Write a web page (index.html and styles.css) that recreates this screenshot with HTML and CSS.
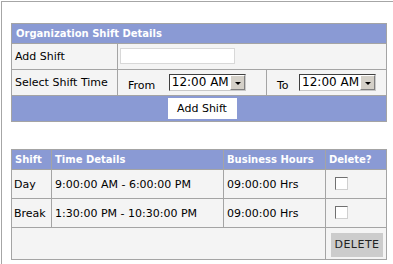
FILE: index.html
```html
<!DOCTYPE html>
<html lang="en">
<head>
    <meta charset="UTF-8">
    <title>Organization Shift Details</title>
    <link rel="stylesheet" href="styles.css">
</head>
<body>
    <div class="marco">
        <table class="tabla tabla-turno">
            <colgroup>
                <col class="col-etiqueta">
                <col class="col-desde">
                <col class="col-hasta">
            </colgroup>
            <tr>
                <th colspan="3" class="titulo">Organization Shift Details</th>
            </tr>
            <tr>
                <td>Add Shift</td>
                <td colspan="2"><input type="text" class="campo"></td>
            </tr>
            <tr>
                <td>Select Shift Time</td>
                <td class="hora hora-desde">
                    <span class="texto-hora">From</span>
                    <span class="combo"><span class="combo-valor">12:00 AM</span><span class="combo-flecha"></span></span>
                </td>
                <td class="hora hora-hasta">
                    <span class="texto-hora">To</span>
                    <span class="combo"><span class="combo-valor">12:00 AM</span><span class="combo-flecha"></span></span>
                </td>
            </tr>
            <tr>
                <td colspan="3" class="fila-boton"><button class="btn-agregar">Add Shift</button></td>
            </tr>
        </table>

        <table class="tabla tabla-lista">
            <colgroup>
                <col class="col-turno">
                <col class="col-tiempo">
                <col class="col-horas">
                <col class="col-borrar">
            </colgroup>
            <tr>
                <th>Shift</th>
                <th>Time Details</th>
                <th>Business Hours</th>
                <th>Delete?</th>
            </tr>
            <tr>
                <td>Day</td>
                <td>9:00:00 AM - 6:00:00 PM</td>
                <td>09:00:00 Hrs</td>
                <td class="celda-casilla"><span class="casilla"></span></td>
            </tr>
            <tr>
                <td>Break</td>
                <td>1:30:00 PM - 10:30:00 PM</td>
                <td>09:00:00 Hrs</td>
                <td class="celda-casilla"><span class="casilla"></span></td>
            </tr>
            <tr class="fila-final">
                <td colspan="3"></td>
                <td class="celda-boton"><button class="btn-borrar">DELETE</button></td>
            </tr>
        </table>
    </div>
</body>
</html>
```

FILE: styles.css
```css
body {
    margin: 0;
    padding: 1px 0 0 1px;
    background: #ffffff;
    font-family: 'DejaVu Sans', Verdana, sans-serif;
    font-size: 11px;
    color: #000;
    overflow: hidden;
}

/* marco gris exterior */
.marco {
    border-top: 1px solid #a6a6a6;
    border-left: 1px solid #a6a6a6;
    padding: 21px 0 0 9px;
    box-sizing: border-box;
    height: 263px;
}

.tabla {
    border-collapse: collapse;
    table-layout: fixed;
    width: 375px;
    background-color: #f4f4f4;
}

.tabla td, .tabla th {
    border: 1px solid #a4a4a4;
    padding: 0 0 0 3px;
    text-align: left;
    white-space: nowrap;
    overflow: hidden;
}

.tabla th {
    background-color: #8a9ad4;
    color: #ffffff;
    font-weight: bold;
    font-size: 10px;
    height: 19px;
}

/* tabla de alta de turnos */
.tabla-turno {
    border: 1px solid #8a9ad4;
}

.col-etiqueta { width: 106px; }
.col-desde { width: 149px; }
.col-hasta { width: 120px; }

.tabla-turno .titulo {
    padding-left: 4px;
}

.tabla-turno td {
    height: 25px;
}

.campo {
    display: block;
    width: 115px;
    height: 16px;
    box-sizing: border-box;
    border: 1px solid #d8d8d8;
    background: #ffffff;
    margin: -1px 0 0 -1px;
    padding: 0;
}

.hora-desde,
.hora-hasta {
    padding-left: 10px !important;
}

.texto-hora {
    display: inline-block;
    vertical-align: middle;
    margin-top: 6px;
}

.hora-desde .texto-hora {
    margin-right: 10px;
}

.hora-hasta .texto-hora {
    margin-right: 7px;
}

.combo {
    display: inline-flex;
    vertical-align: middle;
    align-items: stretch;
    width: 77px;
    height: 17px;
    box-sizing: border-box;
    border: 1px solid #404040;
    border-right-color: #c8c8c8;
    border-bottom-color: #c8c8c8;
    background: #ffffff;
}

.combo-valor {
    flex: 1;
    font-size: 12px;
    line-height: 15px;
    padding-left: 2px;
}

.combo-flecha {
    position: relative;
    width: 15px;
    background: #d4d0c8;
    border-left: 1px solid #ffffff;
    border-top: 1px solid #ffffff;
    border-right: 1px solid #808080;
    border-bottom: 1px solid #808080;
    box-sizing: border-box;
}

.combo-flecha::after {
    content: "";
    position: absolute;
    left: 4px;
    top: 6px;
    border-left: 3px solid transparent;
    border-right: 3px solid transparent;
    border-top: 3px solid #000;
}

.fila-boton {
    background-color: #8a9ad4;
    text-align: center !important;
    padding: 0 !important;
    height: 26px;
}

.btn-agregar {
    background: #ffffff;
    border: none;
    font-family: 'DejaVu Sans', Verdana, sans-serif;
    font-size: 11px;
    width: 69px;
    height: 21px;
    padding: 0;
    margin-left: 6px;
    vertical-align: middle;
}

/* tabla de turnos existentes */
.tabla-lista {
    margin-top: 27px;
}

.col-turno { width: 40px; }
.col-tiempo { width: 172px; }
.col-horas { width: 102px; }
.col-borrar { width: 61px; }

.tabla-lista td {
    height: 28px;
}

.tabla-lista td:first-child {
    padding-left: 2px;
}

.celda-casilla {
    padding-left: 9px !important;
}

.casilla {
    display: block;
    width: 13px;
    height: 13px;
    box-sizing: border-box;
    background: #fff;
    border: 1px solid #707070;
    border-right-color: #d0d0d0;
    border-bottom-color: #d0d0d0;
    margin-top: -2px;
}

.fila-final td {
    height: 31px;
}

.celda-boton {
    padding-left: 5px !important;
}

.btn-borrar {
    background: #cccccc;
    border: none;
    font-family: 'DejaVu Sans', Verdana, sans-serif;
    font-size: 11px;
    letter-spacing: 0.5px;
    color: #222;
    width: 52px;
    height: 24px;
    padding: 0;
    margin-top: 2px;
}
```
